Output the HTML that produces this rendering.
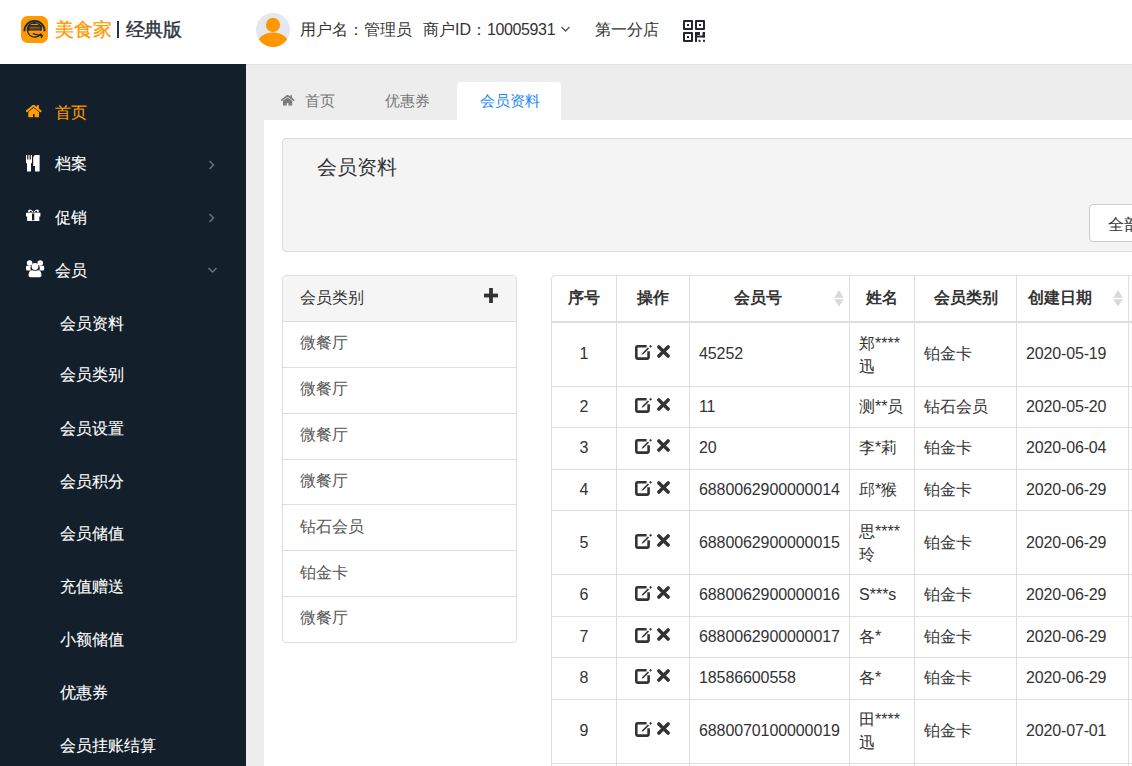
<!DOCTYPE html>
<html><head><meta charset="utf-8">
<style>
*{box-sizing:border-box}
html,body{margin:0;padding:0}
body{width:1132px;height:766px;overflow:hidden;position:relative;background:#fff;font-family:"Liberation Sans",sans-serif;color:#333;font-size:16px}
.a{position:absolute;white-space:nowrap}
#hdr{left:0;top:0;width:1132px;height:64px;background:#fff}
#side{left:0;top:64px;width:246px;height:702px;background:#131f2a}
#gray{left:246px;top:64px;width:886px;height:702px;background:#ededed;border-top:1px solid #e2e2e2}
#main{left:264px;top:120px;width:868px;height:646px;background:#fff}
.mi{color:#fff;-webkit-text-stroke:0.1px currentColor;font-size:16px;line-height:20px}
.sub{color:#fff;-webkit-text-stroke:0.1px #fff;font-size:16px;line-height:20px;left:60px}
.chev{position:absolute}
</style></head><body>
<!-- header -->
<div id="hdr" class="a">
  <svg class="a" style="left:21px;top:16px" width="27" height="27" viewBox="0 0 27 27">
    <rect x="0" y="0" width="27" height="27" rx="6.5" fill="#ff9a00"/>
    <path d="M3.4 15.2 A10.1 10.3 0 0 1 23.6 15.2" fill="none" stroke="#1e2a38" stroke-width="1.9"/>
    <path d="M19.6 17.8 A7.2 7.2 0 1 1 20.4 11.6" fill="none" stroke="#1e2a38" stroke-width="1.4"/>
    <rect x="7.3" y="9.2" width="12.6" height="5.4" fill="#4a3a24"/>
    <rect x="7.3" y="9.2" width="12.6" height="1.2" fill="#1e2a38"/>
    <rect x="8.6" y="11.2" width="10" height="1.1" fill="#a8701c"/>
    <rect x="6.7" y="9.3" width="1.6" height="5.3" fill="#1e2a38"/>
    <rect x="19.2" y="9.3" width="1.6" height="5.3" fill="#1e2a38"/>
    <rect x="11.6" y="7" width="3.4" height="1.1" fill="#1e2a38"/>
    <path d="M11.7 17.6 L20.5 19.9 M19.6 17.6 L21.4 19.9 L20.2 22" fill="none" stroke="#1e2a38" stroke-width="1.3"/>
  </svg>
  <div class="a" style="left:55px;top:19px;font-size:19px;line-height:22px;color:#ff9a00;-webkit-text-stroke:0.3px #ff9a00">美食家</div>
  <div class="a" style="left:117px;top:21px;width:2px;height:17px;background:#2b3440"></div>
  <div class="a" style="left:126px;top:19px;font-size:19px;line-height:22px;color:#2b3440;-webkit-text-stroke:0.4px #2b3440;letter-spacing:-0.6px">经典版</div>
  <svg class="a" style="left:256px;top:13px" width="34" height="34" viewBox="0 0 34 34">
    <defs><clipPath id="cc"><circle cx="17" cy="17" r="17"/></clipPath></defs>
    <circle cx="17" cy="17" r="17" fill="#e6e7ee"/>
    <g clip-path="url(#cc)" fill="#ff9800"><circle cx="17" cy="11.9" r="7.1"/><ellipse cx="17" cy="29.5" rx="15" ry="10"/></g>
  </svg>
  <div class="a" style="left:300px;top:20px;font-size:16px;line-height:20px;color:#333">用户名：管理员</div>
  <div class="a" style="left:423px;top:20px;font-size:16px;line-height:20px;color:#333">商户ID：<span style="letter-spacing:-0.38px">10005931</span></div>
  <svg class="a" style="left:560px;top:25px" width="11" height="8" viewBox="0 0 11 8"><path d="M1.5 2 L5.5 6 L9.5 2" fill="none" stroke="#555" stroke-width="1.3"/></svg>
  <div class="a" style="left:595px;top:20px;font-size:16px;line-height:20px;color:#333">第一分店</div>
  <svg class="a" style="left:683px;top:20px" width="22" height="22" viewBox="0 0 22 22" fill="#25252f">
    <path d="M1 0H9Q10 0 10 1V9Q10 10 9 10H1Q0 10 0 9V1Q0 0 1 0Z M2 2V8H8V2Z" fill-rule="evenodd"/><rect x="4" y="4" width="2" height="2"/>
    <path d="M13 0H21Q22 0 22 1V9Q22 10 21 10H13Q12 10 12 9V1Q12 0 13 0Z M14 2V8H20V2Z" fill-rule="evenodd"/><rect x="16" y="4" width="2" height="2"/>
    <path d="M1 12H9Q10 12 10 13V21Q10 22 9 22H1Q0 22 0 21V13Q0 12 1 12Z M2 14V20H8V14Z" fill-rule="evenodd"/><rect x="4" y="16" width="2" height="2"/>
    <rect x="12" y="12" width="2" height="10"/><rect x="12" y="12" width="5" height="3"/><rect x="12" y="15.5" width="10" height="2"/><rect x="19.5" y="12" width="2.5" height="5.5"/>
    <rect x="15.5" y="19.8" width="2" height="2"/><rect x="20" y="19.8" width="2" height="2"/>
  </svg>
</div>

<!-- sidebar -->
<div id="side" class="a">
  <!-- home icon -->
  <svg class="a" style="left:26px;top:41px" width="16" height="13" viewBox="0 0 16 13" fill="#ff9d00">
    <path d="M0.8 6.2 L7.6 0.6 L14.6 6.2" fill="none" stroke="#ff9d00" stroke-width="2" stroke-linecap="round" stroke-linejoin="round"/>
    <rect x="10.8" y="0.2" width="2.1" height="4.5"/>
    <path d="M2.3 7 L7.6 2.8 L13 7 V12.2 H8.6 V9 H7 V12.2 H2.3 Z"/>
  </svg>
  <div class="a mi" style="left:55px;top:39px;color:#ff9d00">首页</div>
  <!-- cutlery -->
  <svg class="a" style="left:26px;top:91px" width="14" height="17" viewBox="0 0 14 17" fill="#fff">
    <path d="M0 0 H1 V4.5 H1.8 V0 H2.6 V4.5 H3.4 V0 H4.2 V4.5 H5 V0 H6 V7 Q6 8.3 5 8.5 V16 Q5 16.5 4.3 16.5 H1.7 Q1 16.5 1 16 V8.5 Q0 8.3 0 7 Z"/>
    <path d="M7.2 2.5 Q7.5 0 9.5 0 H13.6 V16 Q13.6 16.5 13 16.5 H9.7 Q9 16.5 9 16 V11 H7.2 Z"/>
  </svg>
  <div class="a mi" style="left:55px;top:90px">档案</div>
  <svg class="a" style="left:208px;top:96px" width="8" height="10" viewBox="0 0 8 10"><path d="M1.5 1 L5.5 5 L1.5 9" fill="none" stroke="#69737d" stroke-width="1.5"/></svg>
  <!-- gift -->
  <svg class="a" style="left:26px;top:145px" width="15" height="14" viewBox="0 0 15 14" fill="#fff">
    <path d="M2.3 3.2 Q1.5 0.5 4 0.4 Q6 0.5 7.5 3 Q9 0.5 11 0.4 Q13.5 0.5 12.7 3.2 Z M4.3 1.8 Q3.3 2 4 3 H6.2 Q5.3 1.7 4.3 1.8 Z M10.7 1.8 Q11.7 2 11 3 H8.8 Q9.7 1.7 10.7 1.8 Z" fill-rule="evenodd"/>
    <path d="M0 3.8 H14.4 V7.4 H13.3 V12 H1.1 V7.4 H0 Z M6 4.5 V11.2 H8.3 V4.5 Z" fill-rule="evenodd"/>
  </svg>
  <div class="a mi" style="left:55px;top:144px">促销</div>
  <svg class="a" style="left:208px;top:149px" width="8" height="10" viewBox="0 0 8 10"><path d="M1.5 1 L5.5 5 L1.5 9" fill="none" stroke="#69737d" stroke-width="1.5"/></svg>
  <!-- users -->
  <svg class="a" style="left:26px;top:196px" width="19" height="18" viewBox="0 0 19 18" fill="#fff">
    <circle cx="3.6" cy="3" r="2.8"/><circle cx="14.2" cy="3" r="2.8"/>
    <path d="M0 7 Q0 5.6 1.5 5.8 H5 Q3.5 8.5 5 10.5 H1.5 Q0 10.5 0 9 Z"/>
    <path d="M18.2 7 Q18.2 5.6 16.7 5.8 H13.2 Q14.7 8.5 13.2 10.5 H16.7 Q18.2 10.5 18.2 9 Z"/>
    <circle cx="9" cy="6.5" r="3.4"/>
    <path d="M2.5 15.5 Q2.5 10.3 6.5 10.3 Q9 11.3 11.5 10.3 Q15.5 10.3 15.5 15.5 Q15.5 17.3 13.5 17.3 H4.5 Q2.5 17.3 2.5 15.5 Z"/>
  </svg>
  <div class="a mi" style="left:55px;top:197px">会员</div>
  <svg class="a" style="left:207px;top:202px" width="11" height="8" viewBox="0 0 11 8"><path d="M1.5 2 L5.5 6 L9.5 2" fill="none" stroke="#69737d" stroke-width="1.5"/></svg>
  <div class="a sub" style="top:250px">会员资料</div>
  <div class="a sub" style="top:301px">会员类别</div>
  <div class="a sub" style="top:355px">会员设置</div>
  <div class="a sub" style="top:408px">会员积分</div>
  <div class="a sub" style="top:460px">会员储值</div>
  <div class="a sub" style="top:513px">充值赠送</div>
  <div class="a sub" style="top:566px">小额储值</div>
  <div class="a sub" style="top:619px">优惠券</div>
  <div class="a sub" style="top:672px">会员挂账结算</div>
</div>

<div id="gray" class="a"></div>
<svg class="a" style="left:281px;top:95px" width="14" height="11" viewBox="0 0 14 11" fill="#7b7b7b">
 <path d="M0.7 5.2 L6.6 0.6 L12.6 5.2" fill="none" stroke="#7b7b7b" stroke-width="1.7" stroke-linecap="round" stroke-linejoin="round"/>
 <rect x="9.2" y="0.3" width="1.8" height="3.6"/>
 <path d="M2 5.8 L6.6 2.4 L11.2 5.8 V10.6 H7.4 V8 H5.8 V10.6 H2 Z"/></svg>
<div class="a" style="left:305px;top:91px;font-size:15px;line-height:20px;color:#777">首页</div>
<div class="a" style="left:385px;top:91px;font-size:15px;line-height:20px;color:#777">优惠券</div>
<div class="a" style="left:457px;top:82px;width:104px;height:40px;background:#fff;border-radius:4px 4px 0 0"></div>
<div class="a" style="left:480px;top:91px;font-size:15px;line-height:20px;color:#1a88f8">会员资料</div>
<div id="main" class="a"></div>
<div class="a" style="left:282px;top:138px;width:900px;height:114px;background:#f4f4f4;border:1px solid #dcdcdc;border-radius:4px"></div>
<div class="a" style="left:317px;top:155px;font-size:20px;line-height:24px;color:#333">会员资料</div>
<div class="a" style="left:1089px;top:204px;width:100px;height:38px;background:#fff;border:1px solid #ccc;border-radius:4px"></div>
<div class="a" style="left:1108px;top:215px;font-size:16px;line-height:20px;color:#333">全部会员</div>
<div class="a" style="left:282px;top:275px;width:235px;height:368px;background:#fff;border:1px solid #ddd;border-radius:4px;overflow:hidden"><div style="height:46px;background:#f5f5f5"></div></div>
<div class="a" style="left:283px;top:321px;width:233px;height:1px;background:#ddd"></div>
<div class="a" style="left:283px;top:367px;width:233px;height:1px;background:#ddd"></div>
<div class="a" style="left:283px;top:413px;width:233px;height:1px;background:#ddd"></div>
<div class="a" style="left:283px;top:459px;width:233px;height:1px;background:#ddd"></div>
<div class="a" style="left:283px;top:504px;width:233px;height:1px;background:#ddd"></div>
<div class="a" style="left:283px;top:550px;width:233px;height:1px;background:#ddd"></div>
<div class="a" style="left:283px;top:596px;width:233px;height:1px;background:#ddd"></div>
<div class="a" style="left:300px;top:288px;font-size:16px;line-height:20px;color:#333">会员类别</div>
<svg class="a" style="left:484px;top:288px" width="14" height="15" viewBox="0 0 14 15" fill="#333"><rect x="5.1" y="0" width="3.8" height="15"/><rect x="0" y="5.6" width="14" height="3.8"/></svg>
<div class="a" style="left:300px;top:333px;font-size:16px;line-height:20px;color:#555">微餐厅</div>
<div class="a" style="left:300px;top:379px;font-size:16px;line-height:20px;color:#555">微餐厅</div>
<div class="a" style="left:300px;top:425px;font-size:16px;line-height:20px;color:#555">微餐厅</div>
<div class="a" style="left:300px;top:471px;font-size:16px;line-height:20px;color:#555">微餐厅</div>
<div class="a" style="left:300px;top:517px;font-size:16px;line-height:20px;color:#555">钻石会员</div>
<div class="a" style="left:300px;top:563px;font-size:16px;line-height:20px;color:#555">铂金卡</div>
<div class="a" style="left:300px;top:608px;font-size:16px;line-height:20px;color:#555">微餐厅</div>
<div class="a" style="left:551px;top:275px;width:700px;height:600px;border:1px solid #ddd;border-radius:4px"></div>
<div class="a" style="left:616px;top:276px;width:1px;height:490px;background:#ddd"></div>
<div class="a" style="left:689px;top:276px;width:1px;height:490px;background:#ddd"></div>
<div class="a" style="left:849px;top:276px;width:1px;height:490px;background:#ddd"></div>
<div class="a" style="left:914px;top:276px;width:1px;height:490px;background:#ddd"></div>
<div class="a" style="left:1016px;top:276px;width:1px;height:490px;background:#ddd"></div>
<div class="a" style="left:1128px;top:276px;width:1px;height:490px;background:#ddd"></div>
<div class="a" style="left:552px;top:321px;width:600px;height:2px;background:#ddd"></div>
<div class="a" style="left:552px;top:386px;width:600px;height:1px;background:#ddd"></div>
<div class="a" style="left:552px;top:427px;width:600px;height:1px;background:#ddd"></div>
<div class="a" style="left:552px;top:469px;width:600px;height:1px;background:#ddd"></div>
<div class="a" style="left:552px;top:510px;width:600px;height:1px;background:#ddd"></div>
<div class="a" style="left:552px;top:574px;width:600px;height:1px;background:#ddd"></div>
<div class="a" style="left:552px;top:616px;width:600px;height:1px;background:#ddd"></div>
<div class="a" style="left:552px;top:657px;width:600px;height:1px;background:#ddd"></div>
<div class="a" style="left:552px;top:699px;width:600px;height:1px;background:#ddd"></div>
<div class="a" style="left:552px;top:763px;width:600px;height:1px;background:#ddd"></div>
<div class="a" style="left:552px;width:64px;top:288px;text-align:center;font-weight:bold;font-size:16px;line-height:20px;color:#333">序号</div>
<div class="a" style="left:617px;width:72px;top:288px;text-align:center;font-weight:bold;font-size:16px;line-height:20px;color:#333">操作</div>
<div class="a" style="left:696px;width:123px;top:288px;text-align:center;font-weight:bold;font-size:16px;line-height:20px;color:#333">会员号</div>
<div class="a" style="left:850px;width:64px;top:288px;text-align:center;font-weight:bold;font-size:16px;line-height:20px;color:#333">姓名</div>
<div class="a" style="left:915px;width:101px;top:288px;text-align:center;font-weight:bold;font-size:16px;line-height:20px;color:#333">会员类别</div>
<div class="a" style="left:1028px;top:288px;font-weight:bold;font-size:16px;line-height:20px;color:#333">创建日期</div>
<svg class="a" style="left:834px;top:290px" width="10" height="17" viewBox="0 0 10 17" fill="#d9d9d9"><path d="M5 0 L9.8 7.8 H0.2 Z M5 16.5 L9.8 9.2 H0.2 Z"/></svg>
<svg class="a" style="left:1113px;top:290px" width="10" height="17" viewBox="0 0 10 17" fill="#d9d9d9"><path d="M5 0 L9.8 7.8 H0.2 Z M5 16.5 L9.8 9.2 H0.2 Z"/></svg>
<div class="a" style="left:552px;width:64px;top:344px;text-align:center;font-size:16px;line-height:20px;color:#333">1</div>
<svg class="a" style="left:635px;top:345px" width="18" height="15" viewBox="0 0 18 15"><path d="M11.6 1.3 H2.8 Q1.3 1.3 1.3 2.8 V12.1 Q1.3 13.6 2.8 13.6 H12.1 Q13.6 13.6 13.6 12.1 V6.2" fill="none" stroke="#333" stroke-width="2.6"/><path d="M6.6 9.8 L7.4 7.9 L12.9 2.4 L14.1 3.6 L8.6 9.1 Z" fill="#333"/><path d="M15.6 -0.1 L17 1.3 L15.6 2.7 L14.2 1.3 Z" fill="#333"/></svg>
<svg class="a" style="left:657px;top:345px" width="13" height="13" viewBox="0 0 13 13"><path d="M1.9 1.9 L11.1 11.1 M11.1 1.9 L1.9 11.1" stroke="#333" stroke-width="3.5" stroke-linecap="round"/></svg>
<div class="a" style="left:699px;top:344px;font-size:16px;line-height:20px;color:#333;letter-spacing:-0.1px">45252</div>
<div class="a" style="left:859px;top:332px;font-size:16px;line-height:23px;color:#333">郑****<br>迅</div>
<div class="a" style="left:924px;top:344px;font-size:16px;line-height:20px;color:#333">铂金卡</div>
<div class="a" style="left:1026px;top:344px;font-size:16px;line-height:20px;color:#333;letter-spacing:-0.15px">2020-05-19</div>
<div class="a" style="left:552px;width:64px;top:397px;text-align:center;font-size:16px;line-height:20px;color:#333">2</div>
<svg class="a" style="left:635px;top:398px" width="18" height="15" viewBox="0 0 18 15"><path d="M11.6 1.3 H2.8 Q1.3 1.3 1.3 2.8 V12.1 Q1.3 13.6 2.8 13.6 H12.1 Q13.6 13.6 13.6 12.1 V6.2" fill="none" stroke="#333" stroke-width="2.6"/><path d="M6.6 9.8 L7.4 7.9 L12.9 2.4 L14.1 3.6 L8.6 9.1 Z" fill="#333"/><path d="M15.6 -0.1 L17 1.3 L15.6 2.7 L14.2 1.3 Z" fill="#333"/></svg>
<svg class="a" style="left:657px;top:398px" width="13" height="13" viewBox="0 0 13 13"><path d="M1.9 1.9 L11.1 11.1 M11.1 1.9 L1.9 11.1" stroke="#333" stroke-width="3.5" stroke-linecap="round"/></svg>
<div class="a" style="left:699px;top:397px;font-size:16px;line-height:20px;color:#333;letter-spacing:-0.1px">11</div>
<div class="a" style="left:859px;top:397px;font-size:16px;line-height:20px;color:#333">测**员</div>
<div class="a" style="left:924px;top:397px;font-size:16px;line-height:20px;color:#333">钻石会员</div>
<div class="a" style="left:1026px;top:397px;font-size:16px;line-height:20px;color:#333;letter-spacing:-0.15px">2020-05-20</div>
<div class="a" style="left:552px;width:64px;top:438px;text-align:center;font-size:16px;line-height:20px;color:#333">3</div>
<svg class="a" style="left:635px;top:439px" width="18" height="15" viewBox="0 0 18 15"><path d="M11.6 1.3 H2.8 Q1.3 1.3 1.3 2.8 V12.1 Q1.3 13.6 2.8 13.6 H12.1 Q13.6 13.6 13.6 12.1 V6.2" fill="none" stroke="#333" stroke-width="2.6"/><path d="M6.6 9.8 L7.4 7.9 L12.9 2.4 L14.1 3.6 L8.6 9.1 Z" fill="#333"/><path d="M15.6 -0.1 L17 1.3 L15.6 2.7 L14.2 1.3 Z" fill="#333"/></svg>
<svg class="a" style="left:657px;top:439px" width="13" height="13" viewBox="0 0 13 13"><path d="M1.9 1.9 L11.1 11.1 M11.1 1.9 L1.9 11.1" stroke="#333" stroke-width="3.5" stroke-linecap="round"/></svg>
<div class="a" style="left:699px;top:438px;font-size:16px;line-height:20px;color:#333;letter-spacing:-0.1px">20</div>
<div class="a" style="left:859px;top:438px;font-size:16px;line-height:20px;color:#333">李*莉</div>
<div class="a" style="left:924px;top:438px;font-size:16px;line-height:20px;color:#333">铂金卡</div>
<div class="a" style="left:1026px;top:438px;font-size:16px;line-height:20px;color:#333;letter-spacing:-0.15px">2020-06-04</div>
<div class="a" style="left:552px;width:64px;top:480px;text-align:center;font-size:16px;line-height:20px;color:#333">4</div>
<svg class="a" style="left:635px;top:481px" width="18" height="15" viewBox="0 0 18 15"><path d="M11.6 1.3 H2.8 Q1.3 1.3 1.3 2.8 V12.1 Q1.3 13.6 2.8 13.6 H12.1 Q13.6 13.6 13.6 12.1 V6.2" fill="none" stroke="#333" stroke-width="2.6"/><path d="M6.6 9.8 L7.4 7.9 L12.9 2.4 L14.1 3.6 L8.6 9.1 Z" fill="#333"/><path d="M15.6 -0.1 L17 1.3 L15.6 2.7 L14.2 1.3 Z" fill="#333"/></svg>
<svg class="a" style="left:657px;top:481px" width="13" height="13" viewBox="0 0 13 13"><path d="M1.9 1.9 L11.1 11.1 M11.1 1.9 L1.9 11.1" stroke="#333" stroke-width="3.5" stroke-linecap="round"/></svg>
<div class="a" style="left:699px;top:480px;font-size:16px;line-height:20px;color:#333;letter-spacing:-0.1px">6880062900000014</div>
<div class="a" style="left:859px;top:480px;font-size:16px;line-height:20px;color:#333">邱*猴</div>
<div class="a" style="left:924px;top:480px;font-size:16px;line-height:20px;color:#333">铂金卡</div>
<div class="a" style="left:1026px;top:480px;font-size:16px;line-height:20px;color:#333;letter-spacing:-0.15px">2020-06-29</div>
<div class="a" style="left:552px;width:64px;top:533px;text-align:center;font-size:16px;line-height:20px;color:#333">5</div>
<svg class="a" style="left:635px;top:534px" width="18" height="15" viewBox="0 0 18 15"><path d="M11.6 1.3 H2.8 Q1.3 1.3 1.3 2.8 V12.1 Q1.3 13.6 2.8 13.6 H12.1 Q13.6 13.6 13.6 12.1 V6.2" fill="none" stroke="#333" stroke-width="2.6"/><path d="M6.6 9.8 L7.4 7.9 L12.9 2.4 L14.1 3.6 L8.6 9.1 Z" fill="#333"/><path d="M15.6 -0.1 L17 1.3 L15.6 2.7 L14.2 1.3 Z" fill="#333"/></svg>
<svg class="a" style="left:657px;top:534px" width="13" height="13" viewBox="0 0 13 13"><path d="M1.9 1.9 L11.1 11.1 M11.1 1.9 L1.9 11.1" stroke="#333" stroke-width="3.5" stroke-linecap="round"/></svg>
<div class="a" style="left:699px;top:533px;font-size:16px;line-height:20px;color:#333;letter-spacing:-0.1px">6880062900000015</div>
<div class="a" style="left:859px;top:520px;font-size:16px;line-height:23px;color:#333">思****<br>玲</div>
<div class="a" style="left:924px;top:533px;font-size:16px;line-height:20px;color:#333">铂金卡</div>
<div class="a" style="left:1026px;top:533px;font-size:16px;line-height:20px;color:#333;letter-spacing:-0.15px">2020-06-29</div>
<div class="a" style="left:552px;width:64px;top:585px;text-align:center;font-size:16px;line-height:20px;color:#333">6</div>
<svg class="a" style="left:635px;top:586px" width="18" height="15" viewBox="0 0 18 15"><path d="M11.6 1.3 H2.8 Q1.3 1.3 1.3 2.8 V12.1 Q1.3 13.6 2.8 13.6 H12.1 Q13.6 13.6 13.6 12.1 V6.2" fill="none" stroke="#333" stroke-width="2.6"/><path d="M6.6 9.8 L7.4 7.9 L12.9 2.4 L14.1 3.6 L8.6 9.1 Z" fill="#333"/><path d="M15.6 -0.1 L17 1.3 L15.6 2.7 L14.2 1.3 Z" fill="#333"/></svg>
<svg class="a" style="left:657px;top:586px" width="13" height="13" viewBox="0 0 13 13"><path d="M1.9 1.9 L11.1 11.1 M11.1 1.9 L1.9 11.1" stroke="#333" stroke-width="3.5" stroke-linecap="round"/></svg>
<div class="a" style="left:699px;top:585px;font-size:16px;line-height:20px;color:#333;letter-spacing:-0.1px">6880062900000016</div>
<div class="a" style="left:859px;top:585px;font-size:16px;line-height:20px;color:#333">S***s</div>
<div class="a" style="left:924px;top:585px;font-size:16px;line-height:20px;color:#333">铂金卡</div>
<div class="a" style="left:1026px;top:585px;font-size:16px;line-height:20px;color:#333;letter-spacing:-0.15px">2020-06-29</div>
<div class="a" style="left:552px;width:64px;top:627px;text-align:center;font-size:16px;line-height:20px;color:#333">7</div>
<svg class="a" style="left:635px;top:628px" width="18" height="15" viewBox="0 0 18 15"><path d="M11.6 1.3 H2.8 Q1.3 1.3 1.3 2.8 V12.1 Q1.3 13.6 2.8 13.6 H12.1 Q13.6 13.6 13.6 12.1 V6.2" fill="none" stroke="#333" stroke-width="2.6"/><path d="M6.6 9.8 L7.4 7.9 L12.9 2.4 L14.1 3.6 L8.6 9.1 Z" fill="#333"/><path d="M15.6 -0.1 L17 1.3 L15.6 2.7 L14.2 1.3 Z" fill="#333"/></svg>
<svg class="a" style="left:657px;top:628px" width="13" height="13" viewBox="0 0 13 13"><path d="M1.9 1.9 L11.1 11.1 M11.1 1.9 L1.9 11.1" stroke="#333" stroke-width="3.5" stroke-linecap="round"/></svg>
<div class="a" style="left:699px;top:627px;font-size:16px;line-height:20px;color:#333;letter-spacing:-0.1px">6880062900000017</div>
<div class="a" style="left:859px;top:627px;font-size:16px;line-height:20px;color:#333">各*</div>
<div class="a" style="left:924px;top:627px;font-size:16px;line-height:20px;color:#333">铂金卡</div>
<div class="a" style="left:1026px;top:627px;font-size:16px;line-height:20px;color:#333;letter-spacing:-0.15px">2020-06-29</div>
<div class="a" style="left:552px;width:64px;top:668px;text-align:center;font-size:16px;line-height:20px;color:#333">8</div>
<svg class="a" style="left:635px;top:669px" width="18" height="15" viewBox="0 0 18 15"><path d="M11.6 1.3 H2.8 Q1.3 1.3 1.3 2.8 V12.1 Q1.3 13.6 2.8 13.6 H12.1 Q13.6 13.6 13.6 12.1 V6.2" fill="none" stroke="#333" stroke-width="2.6"/><path d="M6.6 9.8 L7.4 7.9 L12.9 2.4 L14.1 3.6 L8.6 9.1 Z" fill="#333"/><path d="M15.6 -0.1 L17 1.3 L15.6 2.7 L14.2 1.3 Z" fill="#333"/></svg>
<svg class="a" style="left:657px;top:669px" width="13" height="13" viewBox="0 0 13 13"><path d="M1.9 1.9 L11.1 11.1 M11.1 1.9 L1.9 11.1" stroke="#333" stroke-width="3.5" stroke-linecap="round"/></svg>
<div class="a" style="left:699px;top:668px;font-size:16px;line-height:20px;color:#333;letter-spacing:-0.1px">18586600558</div>
<div class="a" style="left:859px;top:668px;font-size:16px;line-height:20px;color:#333">各*</div>
<div class="a" style="left:924px;top:668px;font-size:16px;line-height:20px;color:#333">铂金卡</div>
<div class="a" style="left:1026px;top:668px;font-size:16px;line-height:20px;color:#333;letter-spacing:-0.15px">2020-06-29</div>
<div class="a" style="left:552px;width:64px;top:721px;text-align:center;font-size:16px;line-height:20px;color:#333">9</div>
<svg class="a" style="left:635px;top:722px" width="18" height="15" viewBox="0 0 18 15"><path d="M11.6 1.3 H2.8 Q1.3 1.3 1.3 2.8 V12.1 Q1.3 13.6 2.8 13.6 H12.1 Q13.6 13.6 13.6 12.1 V6.2" fill="none" stroke="#333" stroke-width="2.6"/><path d="M6.6 9.8 L7.4 7.9 L12.9 2.4 L14.1 3.6 L8.6 9.1 Z" fill="#333"/><path d="M15.6 -0.1 L17 1.3 L15.6 2.7 L14.2 1.3 Z" fill="#333"/></svg>
<svg class="a" style="left:657px;top:722px" width="13" height="13" viewBox="0 0 13 13"><path d="M1.9 1.9 L11.1 11.1 M11.1 1.9 L1.9 11.1" stroke="#333" stroke-width="3.5" stroke-linecap="round"/></svg>
<div class="a" style="left:699px;top:721px;font-size:16px;line-height:20px;color:#333;letter-spacing:-0.1px">6880070100000019</div>
<div class="a" style="left:859px;top:708px;font-size:16px;line-height:23px;color:#333">田****<br>迅</div>
<div class="a" style="left:924px;top:721px;font-size:16px;line-height:20px;color:#333">铂金卡</div>
<div class="a" style="left:1026px;top:721px;font-size:16px;line-height:20px;color:#333;letter-spacing:-0.15px">2020-07-01</div>
</body></html>
